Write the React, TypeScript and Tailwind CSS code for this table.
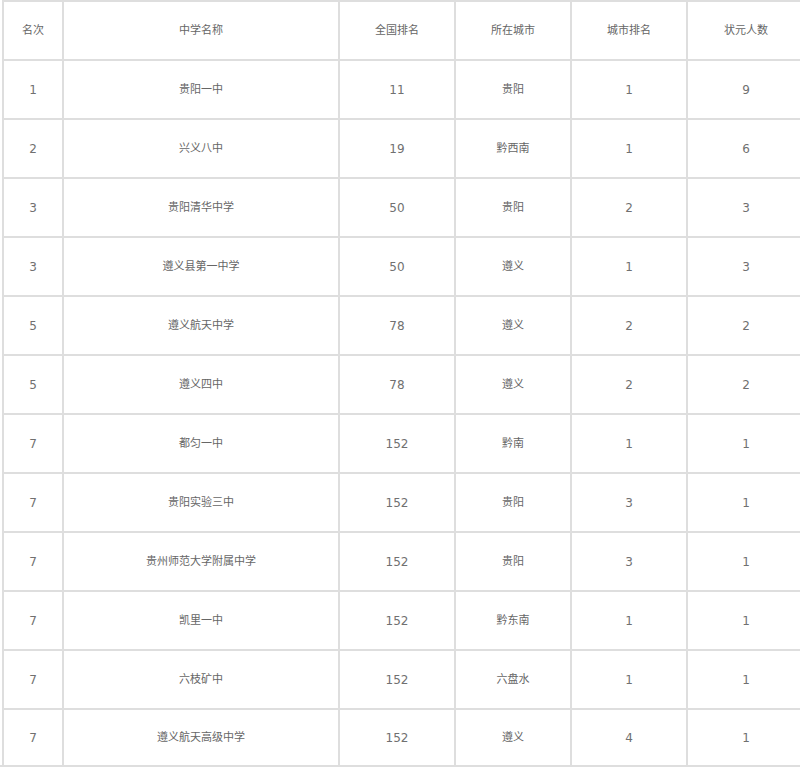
import React from "react";

const header = ["名次", "中学名称", "全国排名", "所在城市", "城市排名", "状元人数"];
const rows: string[][] = [
  ["1", "贵阳一中", "11", "贵阳", "1", "9"],
  ["2", "兴义八中", "19", "黔西南", "1", "6"],
  ["3", "贵阳清华中学", "50", "贵阳", "2", "3"],
  ["3", "遵义县第一中学", "50", "遵义", "1", "3"],
  ["5", "遵义航天中学", "78", "遵义", "2", "2"],
  ["5", "遵义四中", "78", "遵义", "2", "2"],
  ["7", "都匀一中", "152", "黔南", "1", "1"],
  ["7", "贵阳实验三中", "152", "贵阳", "3", "1"],
  ["7", "贵州师范大学附属中学", "152", "贵阳", "3", "1"],
  ["7", "凯里一中", "152", "黔东南", "1", "1"],
  ["7", "六枝矿中", "152", "六盘水", "1", "1"],
  ["7", "遵义航天高级中学", "152", "遵义", "4", "1"],
];

const widths = ["w-[60px]", "w-[276px]", "w-[116px]", "w-[116px]", "w-[116px]", "w-[118px]"];

function Row({ cells, last }: { cells: string[]; last?: boolean }) {
  return (
    <div className={`flex border-t-2 border-[#dedede] ${last ? "h-[57px]" : "h-[59px]"}`}>
      {cells.map((c, i) => {
        const numeric = /^\d+$/.test(c);
        return (
          <div
            key={i}
            className={`${widths[i]} shrink-0 border-l-2 border-[#dedede] flex items-center justify-center ${
              numeric ? "text-[12px] text-[#707070]" : "text-[11px] text-[#666666] pt-[2px]"
            }`}
          >
            {c}
          </div>
        );
      })}
    </div>
  );
}

export default function App() {
  return (
    <div
      className="w-[800px] h-[767px] overflow-hidden bg-white"
      style={{ fontFamily: '"DejaVu Sans", "Noto Sans CJK SC", sans-serif' }}
    >
      <div className="w-[806px] pl-[2px] border-b-2 border-[#dedede]">
        <Row cells={header} />
        {rows.map((r, i) => (
          <Row key={i} cells={r} last={i === rows.length - 1} />
        ))}
      </div>
    </div>
  );
}
